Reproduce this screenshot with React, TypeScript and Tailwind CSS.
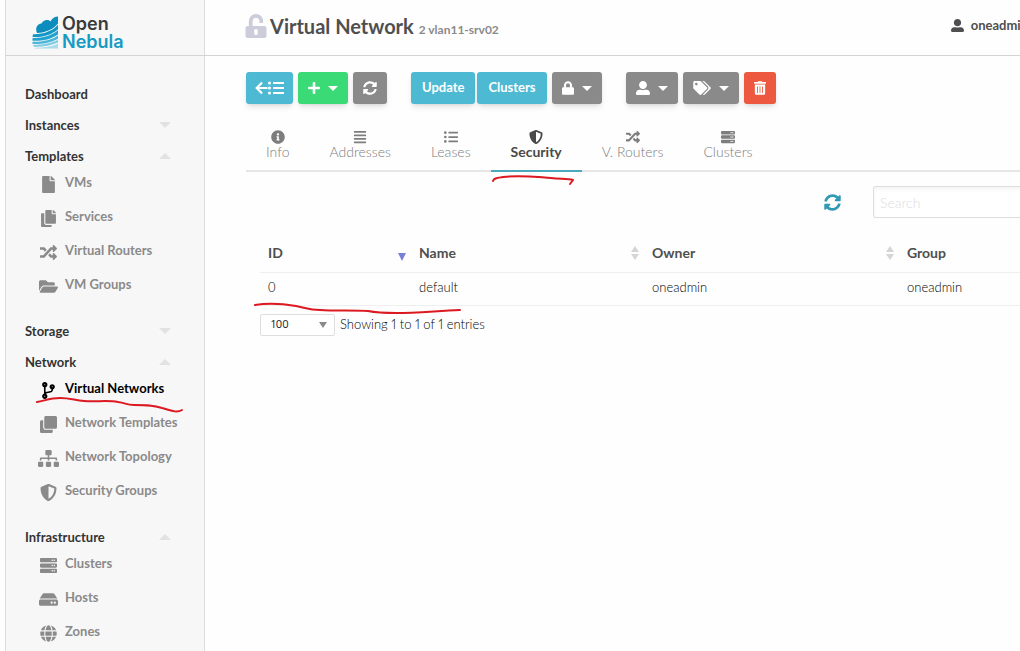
import { useState, type ReactNode } from "react";
import type { IconType } from "react-icons";
import {
  FaAlignJustify,
  FaArrowLeft,
  FaClone,
  FaCodeBranch,
  FaCopy,
  FaFile,
  FaFolderOpen,
  FaGlobe,
  FaHdd,
  FaInfoCircle,
  FaListUl,
  FaLock,
  FaPlus,
  FaRandom,
  FaServer,
  FaShieldAlt,
  FaSitemap,
  FaSyncAlt,
  FaTags,
  FaTrashAlt,
  FaUnlockAlt,
  FaUserAlt,
} from "react-icons/fa";

type NavItem = { label: string; icon: IconType; size?: string };

type NavSection = {
  label: string;
  arrow?: "up" | "down";
  items?: NavItem[];
};

const NAV_SECTIONS: NavSection[] = [
  { label: "Dashboard" },
  { label: "Instances", arrow: "down" },
  {
    label: "Templates",
    arrow: "up",
    items: [
      { label: "VMs", icon: FaFile },
      { label: "Services", icon: FaCopy },
      { label: "Virtual Routers", icon: FaRandom },
      { label: "VM Groups", icon: FaFolderOpen, size: "size-[19px]" },
    ],
  },
  { label: "Storage", arrow: "down" },
  {
    label: "Network",
    arrow: "up",
    items: [
      { label: "Virtual Networks", icon: FaCodeBranch },
      { label: "Network Templates", icon: FaClone },
      { label: "Network Topology", icon: FaSitemap, size: "size-[21px]" },
      { label: "Security Groups", icon: FaShieldAlt },
    ],
  },
  {
    label: "Infrastructure",
    arrow: "up",
    items: [
      { label: "Clusters", icon: FaServer },
      { label: "Hosts", icon: FaHdd, size: "size-[19px]" },
      { label: "Zones", icon: FaGlobe },
    ],
  },
];

const TABS: NavItem[] = [
  { label: "Info", icon: FaInfoCircle },
  { label: "Addresses", icon: FaAlignJustify },
  { label: "Leases", icon: FaListUl },
  { label: "Security", icon: FaShieldAlt },
  { label: "V. Routers", icon: FaRandom },
  { label: "Clusters", icon: FaServer },
];

const BUTTON_COLORS = {
  teal: "bg-[#4db9d3]",
  green: "bg-[#3adb76]",
  gray: "bg-[#8a8a8a]",
  red: "bg-[#ec5840]",
};

function ToolButton({
  color,
  label,
  padding = "px-[10px]",
  caret = false,
  children,
}: {
  color: keyof typeof BUTTON_COLORS;
  label?: string;
  padding?: string;
  caret?: boolean;
  children: ReactNode;
}) {
  return (
    <button
      type="button"
      aria-label={label}
      className={`flex h-8 items-center rounded-[3px] text-[13px] font-bold text-white shadow-md shadow-black/10 ${padding} ${BUTTON_COLORS[color]}`}
    >
      {children}
      {caret && (
        <svg width="10" height="5" viewBox="0 0 10 5" fill="currentColor" className="ml-2">
          <path d="M0 0H10L5 5Z" />
        </svg>
      )}
    </button>
  );
}

function Logo() {
  return (
    <a href="#" className="flex items-center gap-[3px]">
      <svg width="27" height="34" viewBox="0 0 27 34" aria-hidden="true">
        <path
          d="M5 17C3 12 5 8 9.5 7.5C11 4 16 3 18.5 5.5C20 2 23 0.5 26 0.5V7.5C21 13.5 14 16.5 5 17Z"
          fill="#0c8dbd"
        />
        <path d="M1 18.2C11 18.5 20 15.5 26 8.8V13.2C19 19.2 10 21.5 0.5 21Z" fill="#1297c6" />
        <path d="M0.5 22C11 22.3 20 19.5 26 14.3V18.4C19 23.2 10 25.2 0.5 24.8Z" fill="#22a3cf" />
        <path d="M0.5 25.8C11 26 20 23.6 26 19.5V22.7C19 26.7 11 28.2 0.5 28Z" fill="#4ab7da" />
        <path d="M1 29C11 29 20 27 26 23.8V26.6C19 29.6 11 31 2 30.8Z" fill="#7fcbe4" />
        <path d="M3 31.8C12 31.8 20 30.4 26 27.8V32.5H3Z" fill="#a9dcec" />
      </svg>
      <span className="flex flex-col font-['Inter'] text-lg leading-[18px] font-semibold">
        <span className="text-[#3a3a3c]">Open</span>
        <span className="text-[#159bc3]">Nebula</span>
      </span>
    </a>
  );
}

function Scribble({ d, className }: { d: string; className: string }) {
  return (
    <svg
      aria-hidden="true"
      className={`pointer-events-none absolute overflow-visible ${className}`}
      fill="none"
      stroke="#dc1820"
      strokeWidth="2"
      strokeLinecap="round"
      strokeLinejoin="round"
    >
      <path d={d} />
    </svg>
  );
}

function Sidebar() {
  return (
    <nav className="w-[200px] shrink-0 border-x border-[#dcdcdc] bg-[#f7f7f7] pt-[22px] pr-[33px] pl-[19px] text-[13px] leading-5 font-bold">
      {NAV_SECTIONS.map((section) => (
        <div key={section.label}>
          <a
            href="#"
            className="flex h-[31px] items-center justify-between text-[#333]"
          >
            {section.label}
            {section.arrow && (
              <svg
                width="12"
                height="6"
                viewBox="0 0 12 6"
                fill="#e2e2e2"
                className={section.arrow === "up" ? "rotate-180" : ""}
              >
                <path d="M0 0H12L6 6Z" />
              </svg>
            )}
          </a>
          {section.items && (
            <ul className="mt-px mb-[7px]">
              {section.items.map(({ label, icon: Icon, size = "size-[17px]" }) => {
                const isActive = label === "Virtual Networks";
                return (
                  <li key={label} className="relative h-[34px]">
                    <a
                      href="#"
                      className={`flex items-start pl-[11px] whitespace-nowrap ${
                        isActive ? "text-black" : "text-[#8a8a8a]"
                      }`}
                    >
                      <span className="mt-1 mr-[5px] flex h-[17px] w-6 shrink-0 items-center justify-center">
                        <Icon className={`shrink-0 ${size}`} />
                      </span>
                      {label}
                    </a>
                    {isActive && (
                      <Scribble
                        className="top-5 left-[11px] h-4 w-36"
                        d="M1 4C8 3 14 0 24 0C34 0 38 2 48 3C60 4 72 2 82 4C90 5 90 7 98 7C110 7 118 7 126 10C136 13 141 15 146 12"
                      />
                    )}
                  </li>
                );
              })}
            </ul>
          )}
        </div>
      ))}
    </nav>
  );
}

function Tabs() {
  const [active, setActive] = useState("Security");

  return (
    <div
      role="tablist"
      className="mt-[22px] ml-[41px] flex border-b-2 border-[#e6e6e6] text-sm leading-4"
    >
      {TABS.map(({ label, icon: Icon }) => {
        const isActive = label === active;
        return (
          <button
            key={label}
            type="button"
            role="tab"
            aria-selected={isActive}
            onClick={() => setActive(label)}
            className={`relative -mb-[2px] flex h-[46px] flex-col items-center border-b-2 px-5 pt-1 ${
              isActive
                ? "border-[#4aa9bf] font-bold text-[#4a4a4a]"
                : "border-transparent font-light text-[#7d7d7d]"
            }`}
          >
            <Icon className="size-[14px]" />
            {label}
            {label === "Security" && (
              <Scribble
                className="top-[50px] left-0 h-3 w-20"
                d="M2 5C3 2 6 2 12 1C30 -1 45 1 60 2C70 3 77 3 82 4L79 8"
              />
            )}
          </button>
        );
      })}
    </div>
  );
}

function SortArrows() {
  return (
    <svg width="8" height="14" viewBox="0 0 8 14" fill="#d5d5d5">
      <path d="M4 0L8 6H0Z" />
      <path d="M4 14L0 8H8Z" />
    </svg>
  );
}

function SecurityGroups() {
  return (
    <section className="mr-4 ml-[55px]">
      <div className="flex h-[62px] items-center justify-end gap-8 pb-[2px]">
        <button type="button" aria-label="Refresh list" className="text-[#3199b5]">
          <FaSyncAlt className="size-[17px]" />
        </button>
        <input
          type="search"
          aria-label="Search"
          placeholder="Search"
          className="h-8 w-[291px] rounded-[2px] border border-[#dedede] bg-white px-1.5 text-sm font-light shadow-inner shadow-black/5 placeholder:text-[#dedede]"
        />
      </div>
      <table className="w-full table-fixed text-left text-[13px]">
        <thead className="text-sm text-[#4f4f4f]">
          <tr className="h-[38px] border-b border-[#efefef]">
            <th className="w-[151px] pr-[5px] pl-2">
              <span className="flex items-center justify-between">
                ID
                <svg width="8" height="8" viewBox="0 0 8 8" fill="#7a7fd6" className="mt-2">
                  <path d="M0 0H8L4 8Z" />
                </svg>
              </span>
            </th>
            <th className="w-[233px] pr-[5px] pl-2">
              <span className="flex items-center justify-between">
                Name
                <SortArrows />
              </span>
            </th>
            <th className="w-[255px] pr-[5px] pl-2">
              <span className="flex items-center justify-between">
                Owner
                <SortArrows />
              </span>
            </th>
            <th className="pr-[5px] pl-2">
              <span className="flex items-center justify-between">
                Group
                <SortArrows />
              </span>
            </th>
          </tr>
        </thead>
        <tbody className="text-black">
          <tr className="h-[33px] border-b border-[#efefef] font-light">
            <td className="relative px-2 pb-px">
              0
              <Scribble
                className="top-7 -left-1 h-4 w-52"
                d="M-1 4C12 2 28 3 40 5C50 7 54 9 64 9C80 10 98 9 112 10C122 12 126 12 140 12C160 12 180 10 204 9"
              />
            </td>
            <td className="px-2 pb-px">default</td>
            <td className="px-2 pb-px">oneadmin</td>
            <td className="px-2 pb-px">oneadmin</td>
          </tr>
        </tbody>
      </table>
      <div className="mt-2 flex items-center text-[13px] font-light text-black proportional-nums">
        <div className="relative flex items-center">
          <select
            aria-label="Entries per page"
            defaultValue="100"
            className="h-[22px] w-[75px] appearance-none rounded-[2px] border border-[#dedede] bg-white pl-2.5 font-['Open_Sans'] text-[11px] font-normal text-[#222]"
          >
            <option>10</option>
            <option>25</option>
            <option>50</option>
            <option>100</option>
          </select>
          <svg
            width="8"
            height="6"
            viewBox="0 0 8 6"
            fill="#8a8a8a"
            className="pointer-events-none absolute right-2"
          >
            <path d="M0 0H8L4 6Z" />
          </svg>
        </div>
        <p className="ml-[5px]">Showing 1 to 1 of 1 entries</p>
        <div className="ml-auto flex gap-5 text-[#b5b5b5]">
          <button type="button">Previous</button>
          <button type="button">1</button>
          <button type="button">Next</button>
        </div>
      </div>
    </section>
  );
}

export default function App() {
  return (
    <div className="flex h-screen flex-col overflow-hidden bg-[#fefefe] pl-[5px] font-['Lato',sans-serif]">
      <header className="flex h-14 shrink-0 border-b border-[#d4d4d4]">
        <div className="flex w-[200px] shrink-0 items-center border-x border-[#dcdcdc] bg-[#f7f7f7] pt-[10px] pl-[26px]">
          <Logo />
        </div>
        <div className="flex grow items-center pb-1 pl-[39px]">
          <FaUnlockAlt className="size-6 text-[#cdccdb]" />
          <h1 className="ml-[2px] text-xl font-bold text-[#4f4f4f]">
            Virtual Network{" "}
            <small className="text-xs text-[#8a8a8a]">2 vlan11-srv02</small>
          </h1>
          <button
            type="button"
            className="-mr-2 ml-auto flex items-center gap-[7px] text-[13px] font-bold text-[#4f4f4f]"
          >
            <FaUserAlt className="size-[13px]" />
            oneadmin
          </button>
        </div>
      </header>

      <div className="flex min-h-0 grow">
        <Sidebar />
        <main className="min-w-0 grow overflow-hidden">
          {/* the content pane is wider than the visible area */}
          <div className="w-[calc(100%+160px)]">
            <div className="flex pt-4 pl-[41px]">
              <ToolButton color="teal" label="Back to list" padding="px-[9px]">
                <FaArrowLeft className="h-[14px] w-[13px]" />
                <FaListUl className="size-4" />
              </ToolButton>
              <div className="ml-[5px] flex gap-[5px]">
                <ToolButton color="green" label="Create" caret>
                  <FaPlus className="h-[14px] w-3" />
                </ToolButton>
                <ToolButton color="gray" label="Refresh">
                  <FaSyncAlt className="size-[14px]" />
                </ToolButton>
              </div>
              <div className="ml-6 flex gap-[2px]">
                <ToolButton color="teal" padding="px-[11px]">
                  Update
                </ToolButton>
                <ToolButton color="teal" padding="px-[11px]">
                  Clusters
                </ToolButton>
              </div>
              <div className="ml-[5px] flex">
                <ToolButton color="gray" label="Lock" caret>
                  <FaLock className="h-[14px] w-3" />
                </ToolButton>
              </div>
              <div className="ml-6 flex gap-[5px]">
                <ToolButton color="gray" label="Ownership" caret>
                  <FaUserAlt className="size-[14px]" />
                </ToolButton>
                <ToolButton color="gray" label="Labels" caret>
                  <FaTags className="h-[14px] w-[18px]" />
                </ToolButton>
                <ToolButton color="red" label="Delete">
                  <FaTrashAlt className="h-[14px] w-3" />
                </ToolButton>
              </div>
            </div>
            <Tabs />
            <SecurityGroups />
          </div>
        </main>
      </div>
    </div>
  );
}
